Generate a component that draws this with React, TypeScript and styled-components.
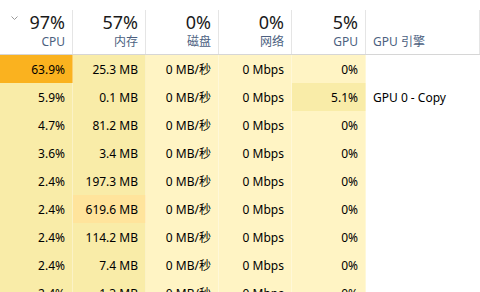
import styled, { createGlobalStyle } from "styled-components";

const GlobalStyle = createGlobalStyle`
  html, body {
    margin: 0;
    padding: 0;
    background: #ffffff;
    overflow: hidden;
  }
  body {
    font-family: "Noto Sans", "Noto Sans CJK SC", sans-serif;
  }
`

const COLS = "73px 73px 73px 73px 74px 1fr"

const Table = styled.div`
  width: 480px;
  height: 292px;
  overflow: hidden;
  display: flex;
  flex-direction: column;
`

const Header = styled.div`
  display: grid;
  grid-template-columns: ${COLS};
  height: 55px;
  border-bottom: 1px solid #d6d6d6;
  box-sizing: border-box;
  flex-shrink: 0;
`

const HeadCell = styled.div<{ $left?: boolean }>`
  position: relative;
  display: flex;
  flex-direction: column;
  align-items: ${({ $left }) => $left ? "flex-start" : "flex-end"};
  justify-content: flex-end;
  padding: 0 7px 3px 7px;
  margin-top: 10px;
  border-right: 1px solid #e5e5e5;
  box-sizing: border-box;
`

const Percent = styled.span`
  font-size: 18px;
  line-height: 22px;
  color: #1a1a1a;
`

const Label = styled.span`
  font-size: 12px;
  line-height: 18px;
  color: #4c5f7f;
`

const Chevron = styled.svg`
  position: absolute;
  left: 11px;
  top: 6px;
`

const Row = styled.div`
  display: grid;
  grid-template-columns: ${COLS};
  height: 28px;
  flex-shrink: 0;
`

const Cell = styled.div<{ $bg: string, $left?: boolean }>`
  background: ${({ $bg }) => $bg};
  display: flex;
  align-items: center;
  justify-content: ${({ $left }) => $left ? "flex-start" : "flex-end"};
  padding: 0 7px;
  font-size: 12px;
  color: #000;
  white-space: nowrap;
  border-right: 1px solid rgba(255, 255, 255, 0.35);
  box-sizing: border-box;
`

const L0 = "#fff4c4"
const L1 = "#f9eca8"
const L2 = "#ffe49c"
const HOT = "#fab21f"
const NONE = "#ffffff"

type RowData = { cpu: string, mem: string, gpu: string, engine: string, cpuBg: string, memBg: string, gpuBg: string }

const rows: RowData[] = [
  { cpu: "63.9%", mem: "25.3 MB", gpu: "0%", engine: "", cpuBg: HOT, memBg: L1, gpuBg: L0 },
  { cpu: "5.9%", mem: "0.1 MB", gpu: "5.1%", engine: "GPU 0 - Copy", cpuBg: L1, memBg: L1, gpuBg: L1 },
  { cpu: "4.7%", mem: "81.2 MB", gpu: "0%", engine: "", cpuBg: L1, memBg: L1, gpuBg: L0 },
  { cpu: "3.6%", mem: "3.4 MB", gpu: "0%", engine: "", cpuBg: L1, memBg: L1, gpuBg: L0 },
  { cpu: "2.4%", mem: "197.3 MB", gpu: "0%", engine: "", cpuBg: L1, memBg: L1, gpuBg: L0 },
  { cpu: "2.4%", mem: "619.6 MB", gpu: "0%", engine: "", cpuBg: L1, memBg: L2, gpuBg: L0 },
  { cpu: "2.4%", mem: "114.2 MB", gpu: "0%", engine: "", cpuBg: L1, memBg: L1, gpuBg: L0 },
  { cpu: "2.4%", mem: "7.4 MB", gpu: "0%", engine: "", cpuBg: L1, memBg: L1, gpuBg: L0 },
  { cpu: "2.4%", mem: "1.3 MB", gpu: "0%", engine: "", cpuBg: L1, memBg: L1, gpuBg: L0 },
]

const headers = [
  { value: "97%", label: "CPU" },
  { value: "57%", label: "内存" },
  { value: "0%", label: "磁盘" },
  { value: "0%", label: "网络" },
  { value: "5%", label: "GPU" },
]

export default function App() {
  return (
    <>
      <GlobalStyle />
      <Table>
        <Header>
          {headers.map((h, i) => (
            <HeadCell key={i}>
              {i === 0 && (
                <Chevron width="7" height="4" viewBox="0 0 7 4">
                  <path d="M0.5 0.5 L3.5 3.5 L6.5 0.5" fill="none" stroke="#9a9a9a" strokeWidth="1" />
                </Chevron>
              )}
              <Percent>{h.value}</Percent>
              <Label>{h.label}</Label>
            </HeadCell>
          ))}
          <HeadCell $left>
            <Label>GPU 引擎</Label>
          </HeadCell>
        </Header>
        {rows.map((r, i) => (
          <Row key={i}>
            <Cell $bg={r.cpuBg}>{r.cpu}</Cell>
            <Cell $bg={r.memBg}>{r.mem}</Cell>
            <Cell $bg={L0}>0 MB/秒</Cell>
            <Cell $bg={L0}>0 Mbps</Cell>
            <Cell $bg={r.gpuBg}>{r.gpu}</Cell>
            <Cell $bg={NONE} $left>{r.engine}</Cell>
          </Row>
        ))}
      </Table>
    </>
  );
}
